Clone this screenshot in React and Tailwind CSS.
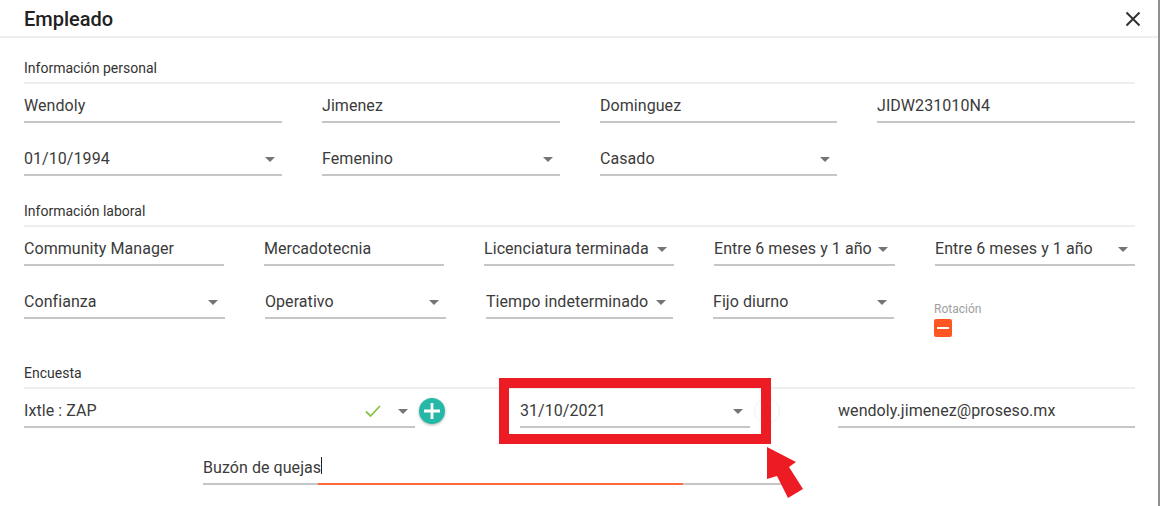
import React from "react";

const Caret = () => (
  <span className="mr-[2px] ml-2 h-0 w-0 shrink-0 border-x-[5px] border-t-[5px] border-x-transparent border-t-[#757575]" />
);

function Field({ text, select, className = "" }) {
  return (
    <div className={`flex h-[39px] shrink-0 items-end border-b-2 border-[#c6c6c6] pb-[3px] ${className}`}>
      <span className="min-w-0 flex-1 whitespace-nowrap text-[16px] leading-[24px] tracking-[0.06px] text-[#3b3b3b]">{text}</span>
      {select && (
        <span className="flex h-[24px] items-center pr-[5px]">
          <Caret />
        </span>
      )}
    </div>
  );
}

function Section({ title, className = "" }) {
  return (
    <div className={`border-b-2 border-[#eeeeee] pb-[4px] pt-[1px] text-[14px] leading-[20px] text-[#333333] ${className}`}>
      {title}
    </div>
  );
}

export default function App() {
  return (
    <div className="relative flex h-[506px] w-[1161px] overflow-hidden bg-white font-['Roboto',sans-serif]">
      <div className="h-full w-[1160px] border-r-2 border-[#8f8f8f]">
        <header className="flex h-[38px] items-center justify-between border-b-2 border-[#eeeeee] pl-[24px] pr-[17px]">
          <h1 className="pt-[1px] text-[20px] font-medium leading-[36px] text-[#212121]">Empleado</h1>
          <svg width="16" height="16" viewBox="0 0 16 16" fill="none" stroke="#333333" strokeWidth="2" className="mt-[2px]">
            <path d="M1.5 1.5 L14.5 14.5 M14.5 1.5 L1.5 14.5" />
          </svg>
        </header>

        <main className="pl-[24px] pr-[23px]">
          <Section title="Información personal" className="mt-[19px]" />
          <div className="flex gap-[40px]">
            <Field text="Wendoly" className="w-[258px]" />
            <Field text="Jimenez" className="w-[238px]" />
            <Field text="Dominguez" className="w-[237px]" />
            <Field text="JIDW231010N4" className="w-[258px]" />
          </div>
          <div className="mt-[14px] flex gap-[40px]">
            <Field text="01/10/1994" select className="w-[258px]" />
            <Field text="Femenino" select className="w-[238px]" />
            <Field text="Casado" select className="w-[237px]" />
          </div>

          <Section title="Información laboral" className="mt-[24px]" />
          <div className="flex gap-[40px]">
            <Field text="Community Manager" className="w-[200px]" />
            <Field text="Mercadotecnia" className="w-[180px]" />
            <Field text="Licenciatura terminada" select className="w-[190px]" />
            <Field text="Entre 6 meses y 1 año" select className="w-[181px]" />
            <Field text="Entre 6 meses y 1 año" select className="w-[200px]" />
          </div>
          <div className="mt-[14px] flex gap-[40px]">
            <Field text="Confianza" select className="w-[201px]" />
            <Field text="Operativo" select className="w-[181px]" />
            <Field text="Tiempo indeterminado" select className="w-[187px]" />
            <Field text="Fijo diurno" select className="w-[181px]" />
            <div className="pt-[21px]">
              <div className="text-[12px] leading-[16px] text-[#9e9e9e]">Rotación</div>
              <button className="mt-[2px] flex h-[18px] w-[18px] items-center justify-center rounded-[2px] bg-[#ff5722]">
                <span className="h-[2px] w-[12px] bg-white" />
              </button>
            </div>
          </div>

          <Section title="Encuesta" className="mt-[25px]" />
          <div className="flex items-start">
            <div className="flex h-[39px] w-[391px] shrink-0 items-end border-b-2 border-[#c6c6c6] pb-[3px]">
              <span className="flex-1 text-[16px] leading-[24px] tracking-[0.06px] text-[#3b3b3b]">Ixtle : ZAP</span>
              <span className="flex h-[24px] items-center pr-[5px]">
                <svg width="16" height="12" viewBox="0 0 16 12" fill="none" stroke="#8bc34a" strokeWidth="1.8" className="mr-[9px]">
                  <path d="M1 6.5 L5.5 11 L15 1" />
                </svg>
                <Caret />
              </span>
            </div>
            <button className="ml-[4px] mt-[9px] flex h-[26px] w-[26px] shrink-0 items-center justify-center rounded-full bg-[#26b8a6] shadow-[0_1px_3px_rgba(0,0,0,0.3)]">
              <svg width="18" height="18" viewBox="0 0 18 18" fill="none" stroke="white" strokeWidth="2.8">
                <path d="M9 1 V17 M1 9 H17" />
              </svg>
            </button>
            <Field text="31/10/2021" select className="ml-[75px] w-[230px]" />
            <div className="ml-[4px] mt-[9px] h-[26px] w-[26px] shrink-0 rounded-full border border-[#f2f2f2]" />
            <Field text="wendoly.jimenez@proseso.mx" className="ml-[58px] w-[297px]" />
          </div>
          <div className="relative ml-[179px] mt-[18px] w-[580px]">
            <div className="flex h-[39px] items-end border-b-2 border-[#c6c6c6] pb-[3px]">
              <span className="flex h-[24px] items-center">
                <span className="text-[16px] leading-[24px] tracking-[0.06px] text-[#3b3b3b]">Buzón de quejas</span>
                <span className="mb-[5px] h-[17px] w-px bg-[#222222]" />
              </span>
            </div>
            <div className="absolute bottom-0 left-[115px] h-[2px] w-[365px] bg-[#ff6a3c]" />
          </div>
        </main>
      </div>

      <div className="pointer-events-none absolute left-[499px] top-[378px] h-[66px] w-[272px] border-[10px] border-[#ed1c24]" />
      <svg className="pointer-events-none absolute left-[760px] top-[440px]" width="50" height="62" viewBox="0 0 50 62">
        <polygon points="7,7 36,22 29,27 43,49 28,58 17,36 7,39" fill="#ed1c24" />
      </svg>
    </div>
  );
}
